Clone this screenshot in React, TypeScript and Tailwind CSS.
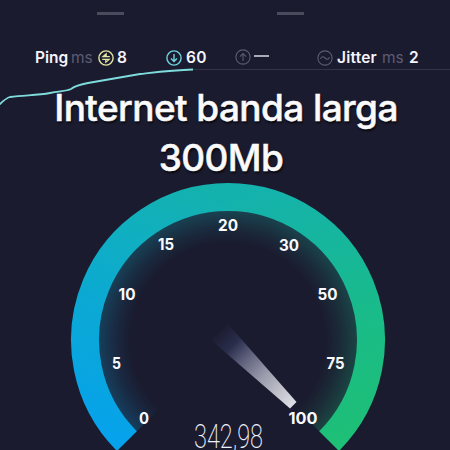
const ticks = [
  { label: '0', x: 144, y: 423.5, w: 10 },
  { label: '5', x: 116.5, y: 368.5, w: 9 },
  { label: '10', x: 127, y: 300, w: 17 },
  { label: '15', x: 166, y: 249.5, w: 16 },
  { label: '20', x: 228, y: 231, w: 20 },
  { label: '30', x: 289, y: 250.5, w: 20 },
  { label: '50', x: 327.5, y: 300, w: 20 },
  { label: '75', x: 335.5, y: 368.5, w: 18 },
  { label: '100', x: 303, y: 423.5, w: 29 },
];

function Ring({ kind, className }: { kind: 'ping' | 'down' | 'up' | 'jitter'; className: string }) {
  return (
    <svg className={`size-4 shrink-0 ${className}`} viewBox="0 0 16 16" fill="none" stroke="currentColor" strokeWidth="1.1">
      <circle cx="8" cy="8" r="7.1" strokeWidth={kind === 'ping' || kind === 'down' ? 1.4 : 1.1} />
      {kind === 'ping' && <path d="M11.8 6.6H4.8L8.2 3.7V6.4M4.2 9.4H11.2L7.8 12.3V9.6" strokeWidth="1.2" />}
      {kind === 'down' && <path d="M8 4V11.4M5 8.4L8 11.5L11 8.4" strokeWidth="1.4" />}
      {kind === 'up' && <path d="M8 12V4.6M4.9 7.6L8 4.5L11.1 7.6" />}
      {kind === 'jitter' && <path d="M3.5 8.8C4.7 6.2 6.3 6.3 8 8S11.3 9.8 12.5 7.2" />}
    </svg>
  );
}

function Stats() {
  return (
    <div className="flex h-4 items-center text-[15.5px] leading-4 font-semibold text-[#f4f4fa]">
      <div className="flex w-[131px] items-center pt-px pl-[35px]">
        <span className="w-[36px]">Ping</span>
        <span className="w-[27px] font-normal text-[#5c5c72]">ms</span>
        <Ring kind="ping" className="text-[#e3e79f]" />
        <span className="ml-[3px]">8</span>
      </div>
      <div className="flex w-[69px] items-center pt-px pl-[35px]">
        <Ring kind="down" className="text-[#6fd3dc]" />
        <span className="ml-[4px] tracking-[0.3px]">60</span>
      </div>
      <div className="flex w-[82px] items-center pl-[35px]">
        <Ring kind="up" className="text-[#5c5c70]" />
        <span className="mb-[2px] ml-[3px] h-[2px] w-[15px] shrink-0 bg-[#a9a9b8]" />
      </div>
      <div className="flex items-center pt-px pl-[35px]">
        <Ring kind="jitter" className="text-[#5c5c70]" />
        <span className="ml-[4px] w-[45px] tracking-[0.2px]">Jitter</span>
        <span className="w-[27px] font-normal text-[#5c5c72]">ms</span>
        <span>2</span>
      </div>
    </div>
  );
}

function Gauge() {
  return (
    <svg className="block h-[270px] w-[450px]" viewBox="0 180 450 270">
      <defs>
        <linearGradient id="left" gradientUnits="userSpaceOnUse" x1="110" y1="440" x2="215" y2="194">
          <stop offset="0" stopColor="#06a2ec" />
          <stop offset="0.45" stopColor="#0ba9d3" />
          <stop offset="0.75" stopColor="#10afc0" />
          <stop offset="1" stopColor="#14b2ad" />
        </linearGradient>
        <linearGradient id="right" gradientUnits="userSpaceOnUse" x1="241" y1="194" x2="346" y2="440">
          <stop offset="0" stopColor="#14b2ad" />
          <stop offset="0.3" stopColor="#16b69d" />
          <stop offset="0.6" stopColor="#19bb89" />
          <stop offset="1" stopColor="#1ebf76" />
        </linearGradient>
        <radialGradient id="fade" gradientUnits="userSpaceOnUse" cx="228" cy="340" r="130">
          <stop offset="0.74" stopColor="#fff" stopOpacity="0" />
          <stop offset="0.86" stopColor="#fff" stopOpacity="0.1" />
          <stop offset="1" stopColor="#fff" stopOpacity="0.27" />
        </radialGradient>
        <mask id="glow">
          <path d="M228 340L136 432A130 130 0 1 1 320 432Z" fill="url(#fade)" />
        </mask>
        <linearGradient id="needle" gradientUnits="userSpaceOnUse" x1="217" y1="331" x2="293" y2="405">
          <stop offset="0" stopColor="#1b1b2f" />
          <stop offset="0.2" stopColor="#292d4b" />
          <stop offset="0.38" stopColor="#60627d" />
          <stop offset="0.6" stopColor="#9899aa" />
          <stop offset="0.8" stopColor="#bebec9" />
          <stop offset="1" stopColor="#dedee6" />
        </linearGradient>
      </defs>
      <g mask="url(#glow)">
        <rect x="98" y="210" width="130" height="240" fill="url(#left)" />
        <rect x="228" y="210" width="130" height="240" fill="url(#right)" />
      </g>
      <g fill="none" strokeWidth="28">
        <path d="M126.9 441.1A143 143 0 0 1 228.5 197" stroke="url(#left)" />
        <path d="M228 197A143 143 0 0 1 329.1 441.1" stroke="url(#right)" />
      </g>
      <path d="M228 324L296.5 402L290 408.5L211 340Z" fill="url(#needle)" />
      <g className="fill-[#fafaff] text-[15.5px] font-bold" textAnchor="middle">
        {ticks.map((t) => (
          <text key={t.label} x={t.x} y={t.y} textLength={t.w} lengthAdjust="spacingAndGlyphs">{t.label}</text>
        ))}
      </g>
      <text x="194" y="448" textLength="69" lengthAdjust="spacingAndGlyphs" className="fill-[#f0f0fa] font-[Roboto,sans-serif] text-[34px] font-extralight">
        342,98
      </text>
    </svg>
  );
}

export default function App() {
  return (
    <main className="relative flex h-[450px] w-[450px] flex-col overflow-hidden bg-[#1b1b2f] font-[Inter,sans-serif]">
      <div className="flex h-[49px] shrink-0 gap-[153px] pt-[12px] pl-[97px]">
        <span className="h-[3px] w-[27px] bg-[#4b4b5e]" />
        <span className="h-[3px] w-[27px] bg-[#4b4b5e]" />
      </div>
      <Stats />
      <svg className="absolute top-[60px] left-0 h-[50px] w-[450px]" viewBox="0 60 450 50" fill="none">
        <path d="M193 69.5H450" stroke="#343448" />
        <path d="M-1 105C3 101 6 98 10 97C25 95 37 95.5 50 93C60 91 67 91 71 89C75 86 80 84.5 88 83C106 80 122 77 140 74C158 72 174 70 193 69.5" stroke="#7fdcdc" strokeWidth="1.8" />
      </svg>
      <h1 className="relative flex h-[115px] shrink-0 flex-col items-center pt-[18px] text-[37px] leading-[50px] font-medium text-[#fafafa] [-webkit-text-stroke:0.5px_#fafafa] [text-shadow:1px_2px_2px_#07070d]">
        <span className="mr-[-2px] tracking-[-0.6px] whitespace-nowrap">Internet banda larga</span>
        <span className="mr-[8px] tracking-[-0.6px]">300Mb</span>
      </h1>
      <Gauge />
    </main>
  );
}
